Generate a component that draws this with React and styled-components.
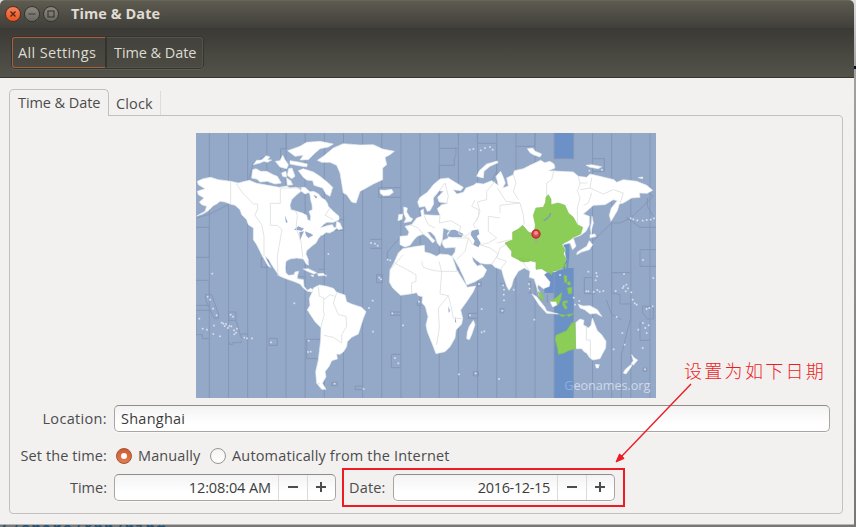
import React from 'react';
import styled, { createGlobalStyle } from 'styled-components';

const Global = createGlobalStyle`
  *{box-sizing:border-box}
  html,body{margin:0;width:856px;height:527px;overflow:hidden;background:#8f8e8d}
  body{font-family:"Open Sans","Noto Sans",sans-serif;font-size:14.5px;color:#4c4c4c}
`;
const Desktop = styled.div`
  position:relative;width:856px;height:527px;overflow:hidden;
  background:
    linear-gradient(#0b1020,#0b1020) 854px 66px / 2px 3px no-repeat,
    linear-gradient(#dedede 0,#a2a2a2 66px,#8a8a8a 300px,#777 100%);
`;
const Window = styled.div`
  display:flex;flex-direction:column;width:854px;height:525px;
  background:#f2f1f0;border-radius:5px 5px 0 0;border-bottom:1px solid #b8b5b2;overflow:hidden;
`;
const TitleBar = styled.header`
  display:flex;align-items:center;gap:3px;height:28px;flex:none;padding:0 0 1px 5px;
  background:linear-gradient(#5e5b50,#403f3a);border-top:1px solid #68655a;
`;
const Title = styled.h1`
  margin:0 0 0 9px;font-size:14.5px;line-height:20px;font-weight:700;color:#dfdbd2;letter-spacing:${p => p.$ls}px;
`;
const WinButton = styled.span`
  width:16px;height:16px;border-radius:50%;border:1px solid ${p => (p.$close ? '#5d2d1c' : '#35342f')};
  background:${p => (p.$close ? 'linear-gradient(#f3835c,#e9541f)' : 'linear-gradient(#898780,#6a6861)')};
  display:grid;place-items:center;
  svg{display:block}
`;
const Toolbar = styled.nav`
  display:flex;height:50px;flex:none;padding:8px 0 0 11px;
  background:linear-gradient(#3a3935,#54534a);border-bottom:1px solid #36352f;
`;
const Crumbs = styled.div`
  display:flex;height:33px;width:193px;border:1px solid #35342f;border-radius:4px;box-shadow:0 1px 0 #5d5c53;
`;
const Crumb = styled.button`
  flex:none;width:${p => p.$w}px;padding:0 0 0 ${p => p.$pl}px;text-align:left;font:inherit;line-height:30px;white-space:nowrap;
  color:#dfdbd2;background:linear-gradient(#43423c,#4b4a42);letter-spacing:${p => p.$ls}px;
  border:1px solid ${p => (p.$focus ? '#a4603f' : '#55544b')};
  border-left-color:${p => (p.$focus ? '#a4603f' : '#34332e')};
  border-right-color:${p => (p.$focus ? '#34332e' : '#55544b')};
  border-radius:${p => (p.$focus ? '3px 0 0 3px' : '0 3px 3px 0')};
`;
const Content = styled.main`padding:11px 11px 0 9px;flex:1;`;
const Tabs = styled.div`display:flex;height:27px;`;
const Tab = styled.div`
  white-space:nowrap;letter-spacing:${p => p.$ls}px;width:${p => p.$w}px;
  ${p => p.$active ? `
    height:27px;z-index:1;border:1px solid #c3c1bf;border-bottom:0;border-radius:5px 5px 0 0;
    background:#f2f1f0;padding-left:8px;line-height:26px;`
    : `height:24px;margin-top:2px;padding-left:7px;line-height:25px;border-right:1px solid #dedcda;`}
`;
const Panel = styled.section`
  height:399px;margin-top:-1px;border:1px solid #c3c1bf;border-radius:0 4px 4px 4px;padding:17px 12px 0 0;
  display:flex;flex-direction:column;
`;
const MapSvg = styled.svg`display:block;width:460px;height:265px;margin-left:186px;flex:none;`;
const Row = styled.div`display:flex;align-items:center;height:${p => p.$h}px;margin-top:${p => p.$mt}px;`;
const Label = styled.label`width:97px;flex:none;text-align:right;white-space:nowrap;letter-spacing:${p => p.$ls}px;line-height:20px;`;
const Caption = styled.span`white-space:nowrap;line-height:20px;letter-spacing:${p => p.$ls}px;width:${p => p.$w}px;margin-left:${p => p.$ml}px;`;
const field = `
  border:1px solid #a9a6a2;border-top-color:#8f8c89;border-radius:5px;
  background:linear-gradient(#f3f3f3,#fff 70%);box-shadow:0 1px 0 #faf9f8;
`;
const Entry = styled.div`
  ${field} width:716px;height:27px;margin-left:7px;padding-left:6px;line-height:25px;color:#3c3c3c;letter-spacing:${p => p.$ls}px;
`;
const Spin = styled.div`${field} display:flex;width:222px;height:27px;margin-left:7px;overflow:hidden;`;
const SpinValue = styled.span`flex:none;width:163px;padding-right:7px;text-align:right;line-height:25px;white-space:nowrap;color:#3c3c3c;letter-spacing:${p => p.$ls}px;`;
const SpinButton = styled.span`
  flex:none;width:${p => p.$w}px;border-left:1px solid #dcdad8;display:grid;place-items:center;
`;
const Radio = styled.span`
  width:16px;height:16px;flex:none;border-radius:50%;margin-left:${p => p.$ml}px;display:grid;place-items:center;
  border:1px solid ${p => (p.$on ? '#a2502f' : '#99958f')};
  background:${p => (p.$on ? 'linear-gradient(#cf5c31,#e37b50)' : 'linear-gradient(#f4f4f4,#fff)')};
  &::after{content:'';width:6px;height:6px;border-radius:50%;background:${p => (p.$on ? '#fff' : 'transparent')};}
`;
const RedFrame = styled.div`position:absolute;left:342px;top:468px;width:283px;height:39px;border:2px solid #ed1c24;`;
const Arrow = styled.svg`position:absolute;left:610px;top:378px;`;
const Note = styled.div`
  position:absolute;left:684px;top:356px;font-family:"Noto Sans CJK SC",sans-serif;font-weight:300;
  font-size:18px;line-height:28px;letter-spacing:2.3px;color:#ed1c24;white-space:nowrap;
`;
const Terminal = styled.div`
  height:2px;overflow:hidden;background:#777;font:bold 16px/20px "Liberation Mono",monospace;color:#24506f;white-space:pre;
  span{display:block;margin-top:-5px;letter-spacing:.8px;}
`;

const LAND = [
  // North and Central America
  '22,160 40,152 62,148 85,155 122,160 145,165 165,160 178,157 200,166 235,172 268,178 290,174 300,180 318,178 328,182 333,190 320,200 305,215 300,232 303,245 320,250 337,255 350,262 353,275 361,278 362,265 357,250 367,245 366,230 362,215 360,200 355,192 370,190 385,197 395,210 405,215 412,225 415,235 430,250 447,265 447,275 430,283 410,283 400,290 390,300 415,292 428,290 430,297 440,300 432,308 418,315 408,313 400,320 392,323 385,332 378,345 365,355 350,368 348,378 355,395 354,410 347,405 340,393 320,390 300,393 288,400 286,420 288,435 296,442 312,440 315,432 326,430 322,445 322,452 340,455 342,475 352,487 362,481 372,487 366,492 352,490 340,480 330,468 310,460 290,453 268,444 258,430 245,410 237,395 225,385 232,400 242,418 235,415 225,398 215,380 210,370 200,350 190,335 190,300 175,290 170,275 155,260 150,245 135,232 120,228 105,222 90,220 80,228 70,233 55,248 38,258 20,264 45,250 50,235 35,230 28,222 42,210 25,200 22,190 45,182 25,170',
  // South America
  '370,480 388,471 410,475 430,481 440,493 465,501 470,521 485,528 515,538 528,551 520,571 512,596 505,618 485,628 472,641 470,656 460,672 450,679 440,678 442,693 425,698 418,714 405,731 408,746 397,766 408,784 395,784 380,766 377,731 385,696 392,636 393,599 375,581 352,546 360,532 358,511 368,490',
  // Greenland
  '382,97 400,85 430,60 460,47 510,51 550,50 578,63 613,70 600,80 585,88 590,110 578,120 578,155 550,168 525,182 510,190 498,225 485,222 470,200 460,195 455,165 450,135 440,112 420,103 395,103',
  // Eurasia
  '630,325 653,323 657,312 645,295 665,290 680,270 695,265 692,248 700,243 702,260 735,262 750,262 742,242 755,230 775,226 747,222 743,208 760,190 748,188 730,210 731,228 720,248 712,250 705,235 688,238 683,222 690,208 712,193 730,170 750,153 775,150 788,158 820,178 812,188 790,185 800,198 820,193 828,180 850,172 860,165 880,168 905,158 925,172 918,145 932,130 940,148 946,165 938,180 955,174 950,150 970,140 973,128 1000,122 1020,112 1052,97 1064,104 1080,100 1092,108 1095,120 1075,128 1110,130 1150,132 1165,145 1190,148 1200,138 1230,145 1272,155 1280,163 1300,155 1340,160 1370,172 1388,187 1372,196 1348,195 1350,208 1325,210 1300,225 1288,228 1282,248 1272,265 1263,280 1258,262 1264,240 1282,218 1270,215 1245,230 1210,232 1180,258 1198,265 1198,290 1188,310 1172,322 1150,330 1158,355 1148,365 1140,345 1118,350 1125,362 1125,378 1128,395 1115,421 1095,431 1072,432 1062,440 1080,462 1078,475 1060,482 1045,470 1042,480 1058,508 1048,506 1038,470 1032,452 1018,448 1020,430 1003,420 985,430 970,455 965,475 957,487 950,475 940,445 935,425 915,418 905,408 885,408 870,405 858,396 846,386 850,400 862,414 875,410 890,426 880,446 855,461 830,471 822,450 808,420 792,392 785,385 795,372 796,358 765,360 758,350 757,338 775,330 772,316 780,308 760,300 757,335 750,355 742,345 735,325 722,312 712,312 724,328 735,338 728,345 715,330 700,318 682,325 672,335 660,352 645,357 630,350',
  // Africa
  '638,362 680,355 703,352 704,372 720,376 740,385 750,378 775,380 787,386 800,425 822,461 832,478 857,474 850,491 830,521 812,546 818,571 815,588 798,606 795,630 780,656 765,671 738,677 730,656 712,611 708,591 714,566 706,536 696,524 698,506 685,503 680,494 660,498 632,502 608,480 598,462 600,426 612,404 625,375',
  '850,577 855,590 845,620 838,635 830,632 832,612 838,595',
  // Australia and Oceania
  '1157,584 1170,573 1182,577 1180,590 1195,600 1203,592 1207,570 1215,590 1222,608 1235,620 1248,640 1247,660 1236,680 1230,692 1208,696 1198,688 1190,675 1183,672 1175,662 1157,662',
  '1165,529 1180,534 1200,533 1222,545 1236,566 1218,556 1200,558 1184,545 1170,540',
  '1216,709 1228,710 1225,720 1219,720', '1325,680 1333,690 1343,696 1330,712 1324,706 1330,698', '1325,708 1324,716 1308,738 1300,735 1305,725',
  '1026,498 1040,506 1065,538 1070,549 1105,558 1070,556 1048,532', '1080,520 1100,518 1103,530 1088,537',
  // Britain, Ireland, Iceland
  '641,237 652,240 650,252 660,268 668,272 664,280 642,284 648,272 642,258', '626,260 638,258 636,274 624,278', '570,186 585,187 605,184 610,193 598,202 580,203 571,196',
  // Japan and Sakhalin
  '1206,265 1210,285 1206,300 1204,320 1201,300 1204,285', '1200,320 1215,318 1218,325 1200,330', '1198,338 1208,350 1198,365 1175,372 1160,380 1162,372 1190,355',
  // Arctic islands
  '860,145 868,128 890,108 922,99 924,104 900,115 882,130 880,150', '1012,62 1028,60 1036,70 1055,78 1050,87 1030,80 1020,74', '1188,112 1205,110 1235,116 1225,122 1200,118', '1345,149 1358,147 1358,152',
  '188,125 198,122 212,130 230,130 250,140 262,145 268,155 274,165 255,168 232,160 210,162 202,154 185,150',
  '190,110 200,97 215,96 228,83 240,87 232,95 245,96 232,103 222,100 210,105', '256,100 270,98 278,82 285,95 295,110 290,122 270,117',
  '293,68 330,55 350,43 390,40 430,48 415,57 390,62 372,78 355,95 330,96 340,82 315,85', '300,98 325,102 352,108 350,117 320,112 300,108',
  '325,128 340,122 370,132 390,145 415,165 428,178 420,205 408,198 398,180 372,172 368,158 350,156 340,148', '335,178 345,178 360,192 345,198 332,188', '275,135 288,130 290,148 278,145', '296,122 306,120 315,145 305,152 292,142', '290,150 302,158 308,170 292,172', '438,298 440,280 450,285 457,302 445,305',
  // Caribbean
  '340,423 355,422 380,434 372,438 350,429', '382,437 400,436 405,442 386,444', '362,442 370,441 370,446', '345,396 352,400 356,411 349,408',
];
const GREEN = [
  '1075,200 1083,214 1083,230 1105,225 1125,232 1135,255 1150,268 1162,290 1178,298 1172,318 1150,328 1138,337 1122,345 1115,350 1125,365 1120,378 1128,392 1120,418 1100,428 1070,432 1055,422 1038,424 1038,402 1020,398 1000,402 965,385 965,370 945,345 968,335 968,312 984,304 998,292 1015,312 1033,318 1036,290 1030,262 1038,240 1060,238 1067,222 1068,208',
  '1155,584 1146,584 1130,608 1098,622 1096,636 1103,661 1105,679 1120,676 1135,668 1157,662',
  '1115,494 1112,515 1108,525 1102,532 1100,520 1082,520 1100,508', '1045,491 1058,500 1061,517 1050,511', '985,392 1020,394 1018,400 990,399',
  '1122,442 1130,444 1131,462 1124,464', '1130,466 1138,460 1143,468 1136,472', '1132,480 1146,478 1145,496 1136,498',
  '1119,520 1132,518 1132,524 1123,526 1132,540 1126,544 1118,530', '1078,432 1087,430 1084,441', '1106,559 1128,562 1116,566', '1130,560 1150,557 1136,566', '1124,412 1130,406 1127,422',
];
const WATER = [
  '775,318 783,306 795,305 820,318 815,328 785,328 772,325', '845,308 865,304 868,318 860,325 872,345 865,358 850,350 854,338 842,320',
  '312,305 325,295 342,302 335,308', '328,312 342,310 334,328 330,340', '345,310 360,316 370,322 355,330 348,322', '284,262 293,283 288,284', '775,535 780,548 776,555', '795,565 799,584 795,582', '370,200 382,206 378,212',
];
const BORDERS = [
  'M122 160V228', 'M138 166L158 195L190 228H203V242L195 262L215 290L222 325V384', 'M333 180H271V226H241V292H262L276 305L268 350L262 385L264 444',
  'M316 248L322 262L318 300L333 340L338 388', 'M420 240L405 262L430 275', 'M748 188L765 165L775 205L770 225', 'M750 262L748 285L782 278L812 295L806 318L828 325L845 310',
  'M856 215L845 235L866 245V265L850 290L856 300', 'M915 160L890 190V215L862 222L870 250L860 280', 'M922 180L948 220L990 225L1000 260L1003 290M930 255V232L990 225M970 140L978 165L970 190L985 215',
  'M895 265L930 270M895 265L895 310L920 330L895 345L870 350', 'M920 345L960 335M870 350L900 360L925 378L905 410M800 330L835 330L848 350M835 332L825 370L800 395',
  'M1092 125L1085 155L1070 165V205', 'M1165 145L1170 168L1162 188L1170 210L1162 240V290', 'M1170 185L1200 180L1205 150M1200 180L1240 198L1270 185L1300 195L1290 225', 'M1205 195L1195 225L1180 232M1170 165H1192',
  'M747 400L755 432L750 498L775 503L745 540L748 600L740 650M695 400L700 418L720 425L748 430H806', 'M612 404L678 440V460L665 465V498M640 380L600 425M775 503L782 530L790 570L815 572',
  'M385 475L388 505L402 510L400 550L403 560L392 598M402 622L430 628L455 645V620L470 595L468 565L445 560L430 525L440 495M402 515L420 500L435 505', 'M1189 595V636H1201V690', 'M660 290L685 300L700 320M702 262L715 290L735 300', 'M1000 405L1020 430M930 425L950 400L920 390L930 360L950 348',
];
const ZONES = [
  'M289 15V62H272V130M18 298H58V388H18M20 270L60 258L118 228M176 155L190 105L225 85M448 275H461V307H400',
  'M18 457H58V518M18 532H55M18 547H58M47 500H65L86 560V571H72L47 515zM18 560V620H37V632H58M116 552H138V577H116zM138 577L154 630H175M154 618H175M154 638V644H128V649H118V642',
  'M237 631H262V652H237zM390 634H350V692H383M425 763H442V773H425zM214 390H235V418H214zM327 446H346M403 396V424H386',
  'M566 179H633M566 179V208H633M540 334H576M540 361H576M633 325L592 372V396M560 440H577V464H560zM602 552H633M602 562H633M602 552V562M604 679H633M604 719H633M604 679V719M496 774H520M496 785H520M496 774V785M682 520V532H695M862 556H835V571H862M850 731H865V744H850zM862 462H874V475H862z',
  'M748 61H805M798 61V78M798 80L793 90V112H748V150M862 15V46H920V130L905 158M977 55H1035V15M1151 15V92H1092M1207 92H1243V130H1207M1265 285H1290L1322 270L1390 205L1372 190M1265 285L1210 338M1310 268L1350 298H1400M1398 365H1350V415H1400M1372 210V235L1390 265',
  'M930 467H944V475M930 542H942V555H930zM1014 461H1022V495H1014M1063 436H1092V495M1072 500V522H1092M1207 449H1183V497H1215M1282 434H1265V495L1290 500V528H1322V570L1294 680V810M1322 434H1274M1249 515L1265 560L1295 575M1358 535H1390V573H1372L1358 555zM1350 580V637H1380M1360 720H1370V730H1360z',
];
const DOTS = '67,437 53,506 60,515 69,542 80,562 28,572 38,602 51,605 72,593 70,618 90,625 122,560 129,566 95,584 100,587 108,588 104,594 114,600 118,594 124,595 132,607 138,614 133,619 141,602 163,629 171,631 186,631 243,643 356,638 354,672 362,671 313,526 408,443 386,767 434,767 568,449 573,454 548,518 537,540 549,611 607,556 639,592 615,690 625,706 521,783 543,345 555,347 563,353 593,395 601,397 687,521 875,543 840,562 875,613 883,610 807,739 857,736 867,468 927,753 940,472 942,485 941,500 942,517 937,548 1017,468 1019,482 1033,575 971,485 1195,431 1219,435 1221,445 1217,457 1302,438 1309,470 1298,480 1307,490 1314,481 1301,475 1324,493 1328,515 1334,526 1340,530 1271,664 1304,650 1345,605 1359,585 1366,600 1376,592 1370,615 1378,540 1370,543 1388,535 1358,660 1365,724 1390,450 1277,489 1280,567 1297,615 1240,489 1229,491 1222,486 1211,492 1195,490 1189,490 1151,509 1155,530 1168,519 1322,271 1330,274 1342,277 1358,278 1370,276 1382,275 1392,271 1359,396 850,63 872,67 885,60 900,57 908,65 839,65 1198,128 1236,126 1110,441 415,378';

const TimezoneMap = () => (
  <MapSvg viewBox="18 15 1380 795" preserveAspectRatio="none">
    <rect x="18" y="15" width="1380" height="795" fill="#94a8c8" />
    <path fill="#6c91c7" d="M1092 15H1151V92H1092zM1120 345H1138V385L1134 420H1151V810H1092V495H1063V425H1120z" />
    <g stroke="#8597b6" strokeWidth="3" fill="none">
      {Array.from({ length: 24 }, (_, i) => {
        const x = 58 + 57.48 * i;
        return <path key={i} d={i === 19 ? `M${x} 545V810` : i === 18 ? `M${x} 15V92M${x} 495V810` : `M${x} 15V810`} />;
      })}
      {ZONES.map((d, i) => <path key={i} d={d} />)}
    </g>
    <g fill="#fff" stroke="#e7edf0" strokeWidth="2" strokeLinejoin="bevel">
      {LAND.map((p, i) => <polygon key={i} points={p} />)}
    </g>
    <g fill="#94a8c8">{WATER.map((p, i) => <polygon key={i} points={p} />)}</g>
    <g fill="none" stroke="#dde1e1" strokeWidth="2.6">{BORDERS.map((d, i) => <path key={i} d={d} />)}</g>
    <g fill="#8ccd57" stroke="#84c154" strokeWidth="2">{GREEN.map((p, i) => <polygon key={i} points={p} />)}</g>
    <path d="M1061 278Q1078 270 1082 255" fill="none" stroke="#7a9eb0" strokeWidth="4" />
    <g fill="#dbe3ed">
      {DOTS.split(' ').map((p, i) => { const [x, y] = p.split(','); return <rect key={i} x={x - 2.5} y={y - 2.5} width="5" height="5" />; })}
    </g>
    <rect x="1036" y="330" width="5" height="14" fill="#a5a9a2" />
    <circle cx="1038" cy="318" r="12" fill="#df4b4b" stroke="#b82c35" strokeWidth="4" />
    <circle cx="1038" cy="315" r="6" fill="#f08f8a" />
    <text x="1123" y="786" fontFamily="Open Sans" fontSize="38" fill="#cfd9e8" textLength="258"><tspan fill="#8eade0">G</tspan>eonames.org</text>
  </MapSvg>
);

const Minus = () => <svg width="13" height="13"><path d="M1 6H11" stroke="#4c4c4c" strokeWidth="2" /></svg>;
const Plus = () => <svg width="13" height="13"><path d="M1 6H11M6 1V11" stroke="#4c4c4c" strokeWidth="2" /></svg>;

function SpinBox({ value, ls }) {
  return (
    <Spin>
      <SpinValue $ls={ls}>{value}</SpinValue>
      <SpinButton $w={29}><Minus /></SpinButton>
      <SpinButton $w={28}><Plus /></SpinButton>
    </Spin>
  );
}

export default function App() {
  return (
    <Desktop>
      <Global />
      <Window>
        <TitleBar>
          <WinButton $close><svg width="8" height="8"><path d="M1.5 1.5L6.5 6.5M6.5 1.5L1.5 6.5" stroke="#5a2413" strokeWidth="1.4" /></svg></WinButton>
          <WinButton><svg width="8" height="8"><path d="M.5 4H7.5" stroke="#3c3b37" strokeWidth="1.2" /></svg></WinButton>
          <WinButton><svg width="8" height="8"><rect x="1" y="1" width="6" height="6" fill="none" stroke="#3c3b37" strokeWidth="1.2" /></svg></WinButton>
          <Title $ls={0.07}>Time &amp; Date</Title>
        </TitleBar>
        <Toolbar>
          <Crumbs>
            <Crumb $w={94} $pl={5} $ls={0.35} $focus>All Settings</Crumb>
            <Crumb $w={97} $pl={7} $ls={-0.08}>Time &amp; Date</Crumb>
          </Crumbs>
        </Toolbar>
        <Content>
          <Tabs>
            <Tab $active $w={100} $ls={-0.08}>Time &amp; Date</Tab>
            <Tab $w={52} $ls={0.15}>Clock</Tab>
          </Tabs>
          <Panel>
            <TimezoneMap />
            <Row $h={27} $mt={7}>
              <Label $ls={0.33}>Location:</Label>
              <Entry $ls={0.25}>Shanghai</Entry>
            </Row>
            <Row $h={20} $mt={14}>
              <Label $ls={0.1}>Set the time:</Label>
              <Radio $on $ml={9} />
              <Caption $ml={6} $w={66} $ls={0.12}>Manually</Caption>
              <Radio $ml={6} />
              <Caption $ml={6} $w={220} $ls={0.16}>Automatically from the Internet</Caption>
            </Row>
            <Row $h={27} $mt={8}>
              <Label $ls={0}>Time:</Label>
              <SpinBox value="12:08:04 AM" ls={-0.1} />
              <Caption $ml={13} $w={37} $ls={0.15}>Date:</Caption>
              <SpinBox value="2016-12-15" ls={-0.35} />
            </Row>
          </Panel>
        </Content>
      </Window>
      <Terminal><span>{'(/share/Xnn/n1n#  .'}</span></Terminal>
      <RedFrame />
      <Arrow width="90" height="90">
        <path d="M81 6L12 78" stroke="#ed1c24" strokeWidth="1.4" />
        <path d="M6 84L9.500 76L12 78L14 80.500z" fill="#ed1c24" stroke="#ed1c24" />
      </Arrow>
      <Note>设置为如下日期</Note>
    </Desktop>
  );
}
